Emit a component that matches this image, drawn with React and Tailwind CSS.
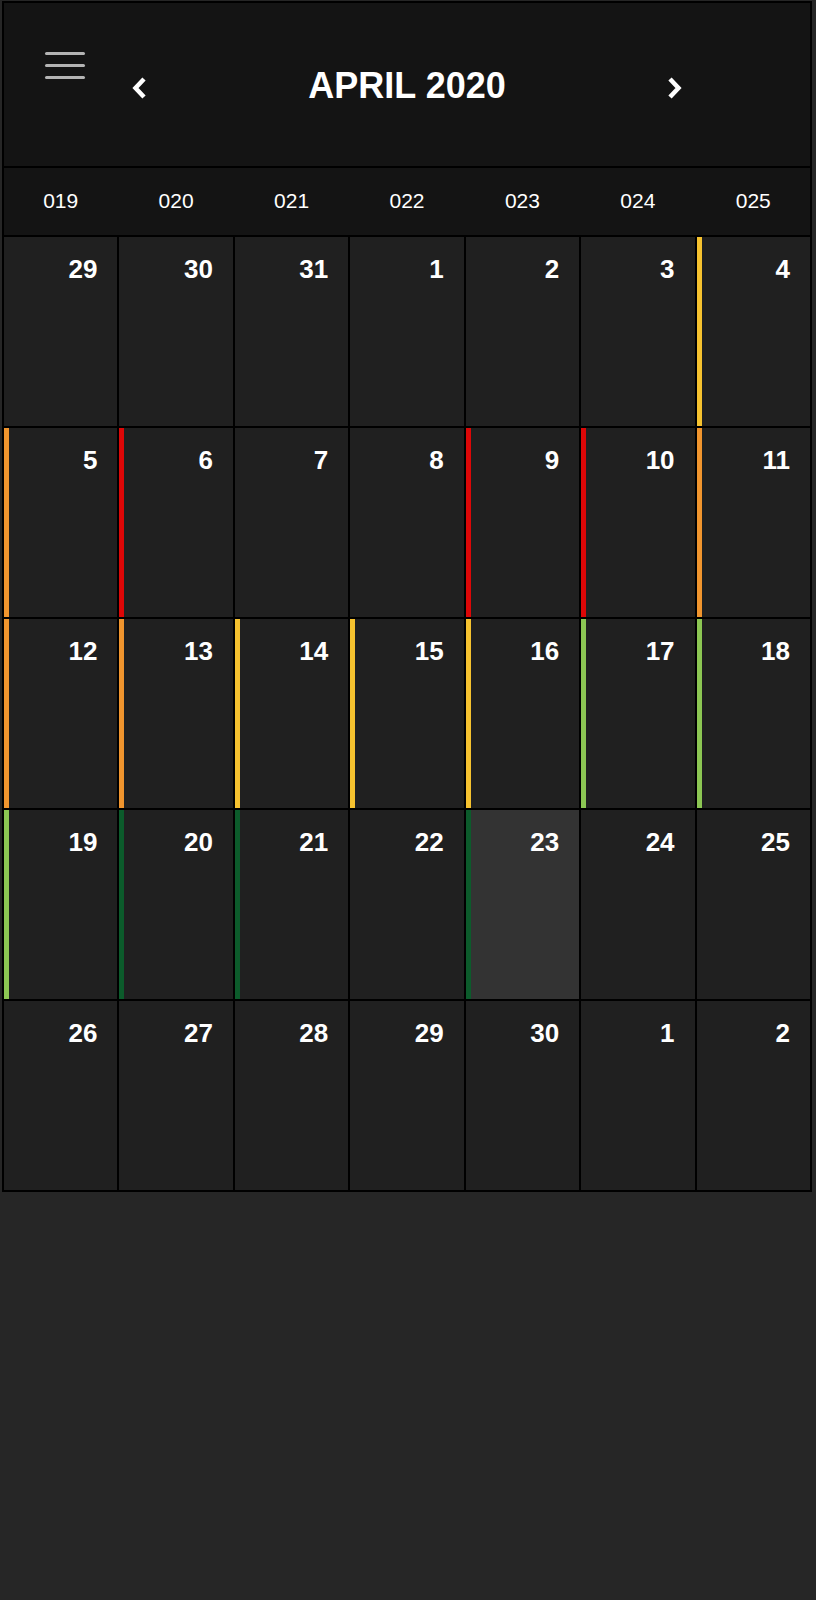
import React from 'react';

const weeks = ['019', '020', '021', '022', '023', '024', '025'];

// bar colours per day status
const bars = {
  orange: 'border-l-[5px] border-l-[#f0952e]',
  red: 'border-l-[5px] border-l-[#dd0707]',
  yellow: 'border-l-[5px] border-l-[#f6c22f]',
  lime: 'border-l-[5px] border-l-[#8cc653]',
  green: 'border-l-[5px] border-l-[#0c5b2b]',
};

const days = [
  [29], [30], [31], [1], [2], [3], [4, 'yellow'],
  [5, 'orange'], [6, 'red'], [7], [8], [9, 'red'], [10, 'red'], [11, 'orange'],
  [12, 'orange'], [13, 'orange'], [14, 'yellow'], [15, 'yellow'], [16, 'yellow'], [17, 'lime'], [18, 'lime'],
  [19, 'lime'], [20, 'green'], [21, 'green'], [22], [23, 'green', true], [24], [25],
  [26], [27], [28], [29], [30], [1], [2],
];

const Chevron = ({ dir }) => (
  <svg width="17" height="24" viewBox="0 0 17 24" className="mt-[5px]">
    <polyline
      points={dir === 'left' ? '13,3 4.5,12 13,21' : '4,3 12.5,12 4,21'}
      fill="none"
      stroke="#fff"
      strokeWidth="4.5"
    />
  </svg>
);

const App = () => {
  return (
    <div className="min-h-[1600px] bg-[#262626] pt-[1px]" style={{ fontFamily: '"Liberation Sans", Arial, sans-serif' }}>
      <div className="ml-[2px] w-[810px] border-2 border-black bg-black">
        <header className="flex h-[163px] bg-[#141414]">
          <div className="w-[127px] pl-[41px] pt-[49px]">
            <div className="flex w-[40px] flex-col gap-[9px]">
              <span className="block h-[3px] rounded-full bg-[#b4b4b4]" />
              <span className="block h-[3px] rounded-full bg-[#b4b4b4]" />
              <span className="block h-[3px] rounded-full bg-[#b4b4b4]" />
            </div>
          </div>
          <div className="flex flex-1 items-center justify-between self-start pt-[62px]">
            <Chevron dir="left" />
            <h1 className="text-[36px] font-bold leading-[41px] text-white">APRIL 2020</h1>
            <Chevron dir="right" />
          </div>
          <div className="w-[127px]" />
        </header>

        <div className="mt-[2px] grid h-[67px] grid-cols-7 gap-[2px] bg-[#141414]">
          {weeks.map((w) => (
            <div key={w} className="flex items-center justify-center pb-[1px] text-[21px] text-white">{w}</div>
          ))}
        </div>

        <div className="mt-[2px] grid grid-cols-7 gap-[2px]">
          {days.map(([n, c, today], i) => (
            <div
              key={i}
              className={`h-[189px] pr-5 pt-[17px] text-right text-[26px] font-bold leading-[30px] text-white ${today ? 'bg-[#333333]' : 'bg-[#202020]'} ${c ? bars[c] : ''}`}
            >
              {n}
            </div>
          ))}
        </div>
      </div>
    </div>
  );
};

export default App;
